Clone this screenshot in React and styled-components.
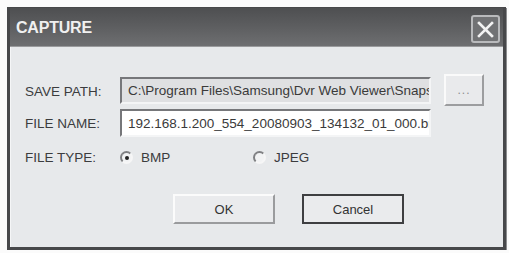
import styled, { createGlobalStyle } from 'styled-components'

const GlobalStyle = createGlobalStyle`
  body {
    margin: 0;
    background: #fbfbfb;
    font-family: "Liberation Sans", Arial, sans-serif;
  }
`

const Stage = styled.div`
  padding: 7px 0 0 7px;
`

const Dialog = styled.div`
  box-sizing: border-box;
  width: 499px;
  height: 243px;
  border: 3px solid #47484a;
  border-top-width: 1px;
  box-shadow: 1px 1px 0 #8c8d8f;
  display: flex;
  flex-direction: column;
  background: #e7e9eb;
`

const TitleBar = styled.div`
  height: 38px;
  flex: none;
  display: flex;
  align-items: center;
  justify-content: space-between;
  padding: 0 3px 0 6px;
  background: linear-gradient(#4e4f51, #5f6062 55%, #6e6f71);
  border-bottom: 1px solid #9a9b9d;
`

const Title = styled.div`
  color: #f0f0f0;
  font-weight: bold;
  font-size: 16px;
  letter-spacing: -0.2px;
  padding-top: 2px;
`

const CloseButton = styled.div`
  box-sizing: border-box;
  width: 29px;
  height: 28px;
  margin-top: 4px;
  border: 2px solid #b9babc;
  border-radius: 3px;
  background: #717274;
  display: flex;
  align-items: center;
  justify-content: center;
`

const Body = styled.div`
  flex: 1;
  padding: 27px 0 0 14px;
  border-left: 1px solid #f5f6f7;
`

const Form = styled.div`
  display: grid;
  grid-template-columns: 95px auto;
  align-items: center;
  row-gap: 3px;
`

const Label = styled.div`
  font-size: 13.5px;
  color: #3b3c3e;
  margin-top: ${p => p.$shift || 0}px;
`

const FieldRow = styled.div`
  display: flex;
  align-items: center;
  gap: 13px;
`

const Field = styled.input`
  box-sizing: border-box;
  width: 311px;
  height: ${p => p.$h}px;
  margin: 0;
  padding: 0 0 0 6px;
  outline: none;
  font-family: "Liberation Sans", Arial, sans-serif;
  font-size: 13.5px;
  color: #3a3a3a;
  background: ${p => (p.disabled ? '#dfe0e2' : '#ffffff')};
  border: 2px solid;
  border-color: #76777a #f4f5f6 #f4f5f6 #76777a;
`

const BrowseButton = styled.div`
  box-sizing: border-box;
  width: 40px;
  height: 32px;
  display: flex;
  align-items: center;
  justify-content: center;
  color: #8d8e90;
  font-size: 12px;
  letter-spacing: 1px;
  background: #e9eaec;
  border: 2px solid;
  border-color: #fafafa #9c9d9f #9c9d9f #fafafa;
`

const RadioGroup = styled.div`
  display: flex;
  margin-top: 10px;
`

const RadioOption = styled.div`
  width: 133px;
  display: flex;
  align-items: center;
  gap: 8px;
  font-size: 13.5px;
  color: #3b3c3e;
`

const RadioCircle = styled.div`
  box-sizing: border-box;
  width: 13px;
  height: 13px;
  border-radius: 50%;
  border: 2px solid;
  border-color: #7f8083 #f6f6f6 #f6f6f6 #7f8083;
  background: #f2f3f4;
  display: flex;
  align-items: center;
  justify-content: center;

  &::after {
    content: '';
    width: 4px;
    height: 4px;
    border-radius: 50%;
    background: ${p => (p.$checked ? '#222' : 'transparent')};
  }
`

const Buttons = styled.div`
  display: flex;
  gap: 27px;
  margin: 29px 0 0 148px;
`

const Button = styled.div`
  box-sizing: border-box;
  width: 102px;
  height: 30px;
  display: flex;
  align-items: center;
  justify-content: center;
  font-size: 13px;
  color: #333;
  background: #eaebed;
  border: 2px solid;
  border-color: ${p =>
    p.$default ? '#3e3f41' : '#fbfbfb #9a9b9d #9a9b9d #fbfbfb'};
`

const CloseIcon = () => (
  <svg width="17" height="17" viewBox="0 0 17 17">
    <path d="M2 2 L15 15 M15 2 L2 15" stroke="#f2f2f2" strokeWidth="2.6" strokeLinecap="square" />
  </svg>
)

const App = () => {
  return (
    <Stage>
      <GlobalStyle />
      <Dialog>
        <TitleBar>
          <Title>CAPTURE</Title>
          <CloseButton>
            <CloseIcon />
          </CloseButton>
        </TitleBar>
        <Body>
          <Form>
            <Label $shift={2}>SAVE PATH:</Label>
            <FieldRow>
              <Field
                $h={27}
                disabled
                readOnly
                value="C:\Program Files\Samsung\Dvr Web Viewer\Snapshot"
              />
              <BrowseButton>...</BrowseButton>
            </FieldRow>
            <Label>FILE NAME:</Label>
            <Field
              $h={28}
              readOnly
              value="192.168.1.200_554_20080903_134132_01_000.bmp"
            />
            <Label $shift={10}>FILE TYPE:</Label>
            <RadioGroup>
              <RadioOption>
                <RadioCircle $checked />
                BMP
              </RadioOption>
              <RadioOption>
                <RadioCircle />
                JPEG
              </RadioOption>
            </RadioGroup>
          </Form>
          <Buttons>
            <Button>OK</Button>
            <Button $default>Cancel</Button>
          </Buttons>
        </Body>
      </Dialog>
    </Stage>
  )
}

export default App
